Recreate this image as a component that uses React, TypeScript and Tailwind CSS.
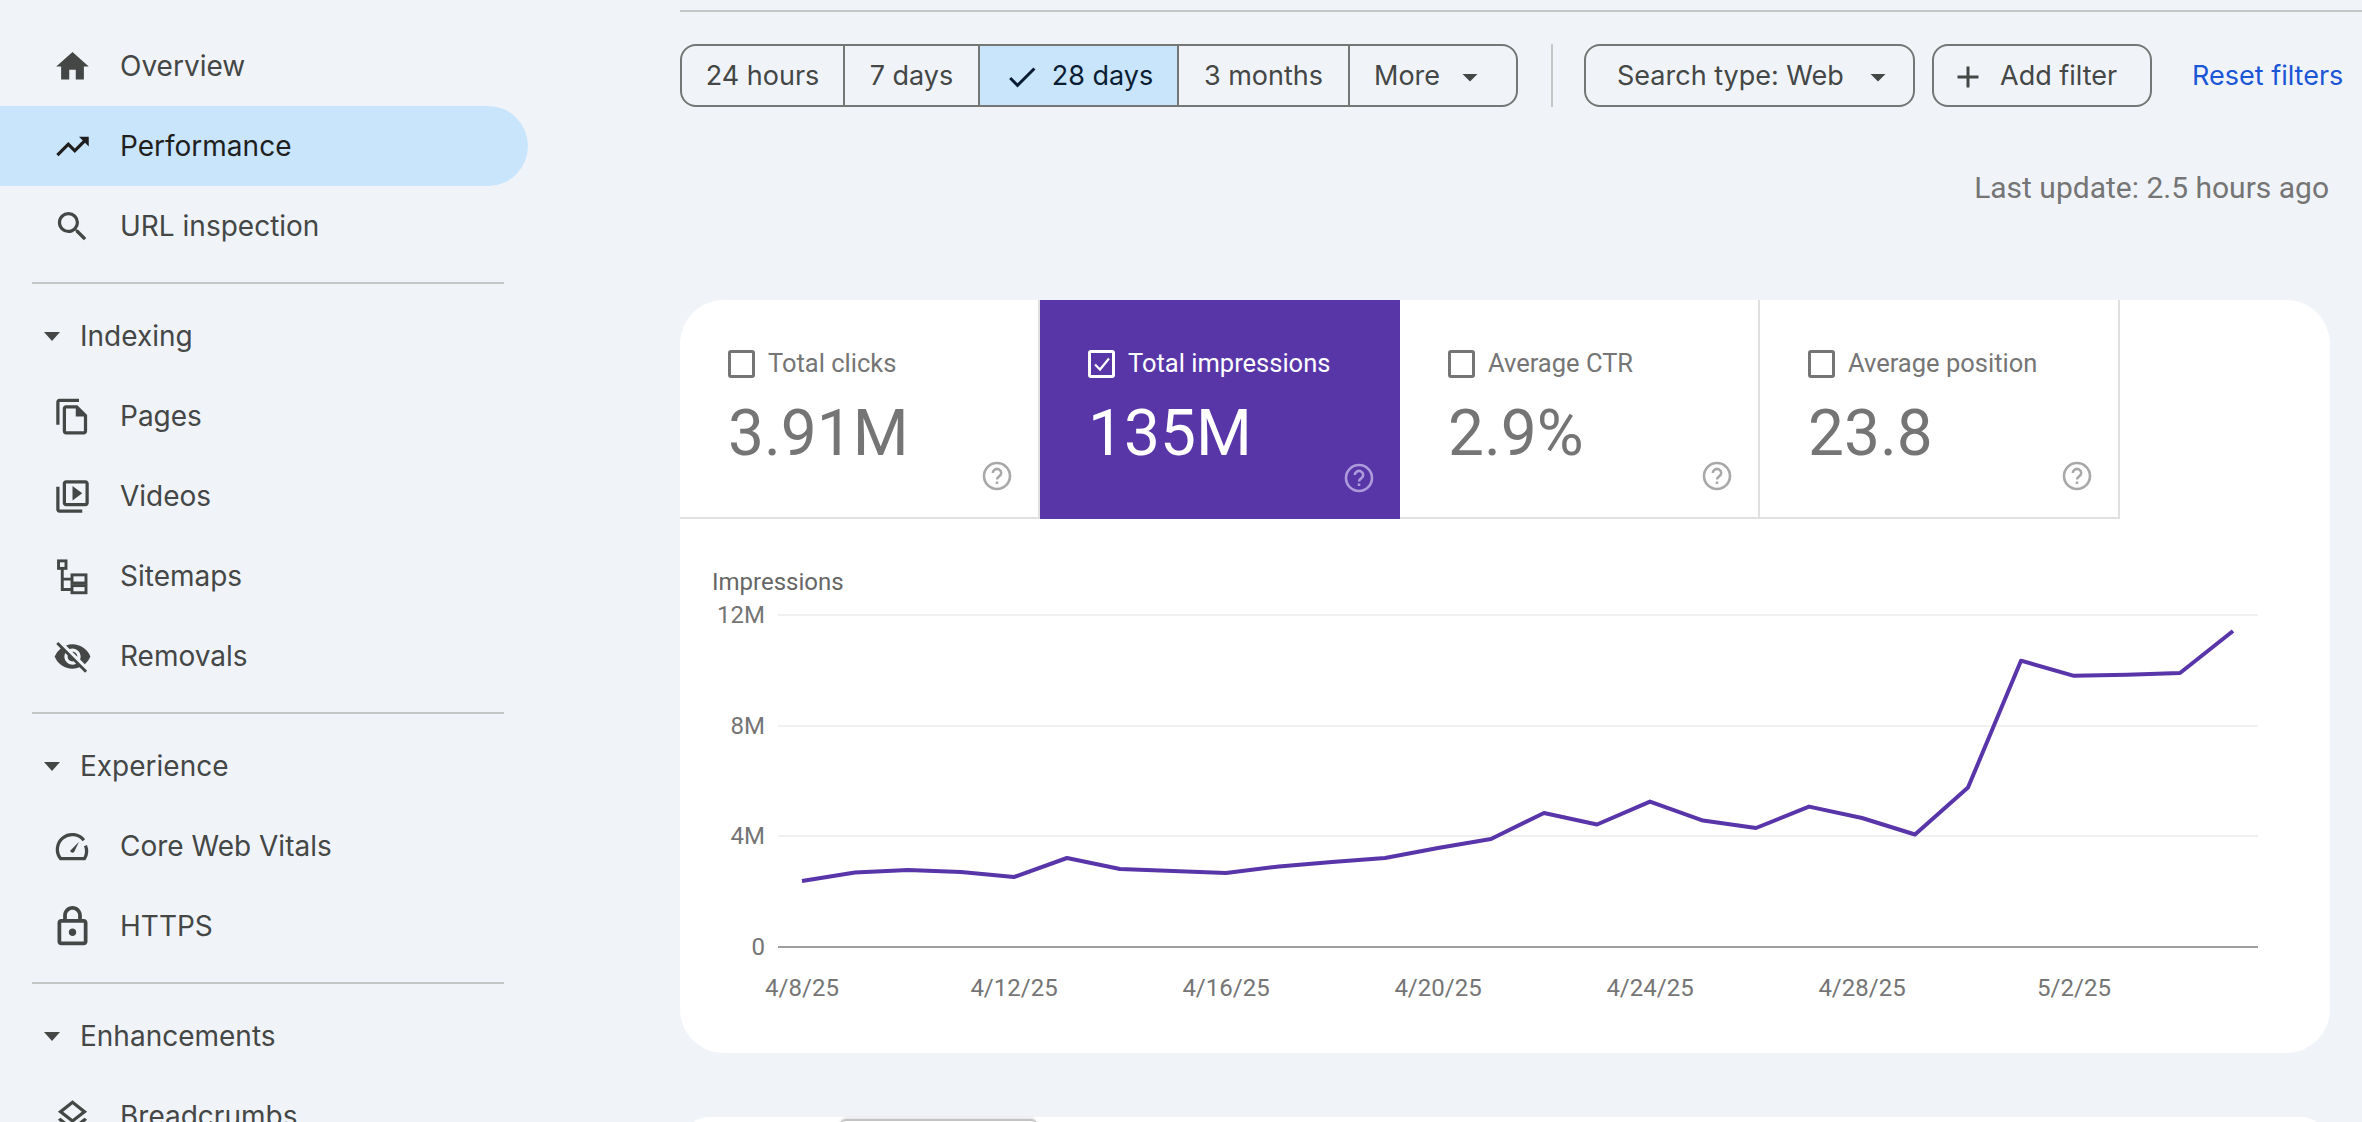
import React from "react";
import {
  MdHome,
  MdTrendingUp,
  MdSearch,
  MdOutlineFileCopy,
  MdOutlineVideoLibrary,
  MdVisibilityOff,
  MdOutlineLock,
  MdOutlineLayers,
  MdArrowDropDown,
  MdCheck,
  MdAdd,
} from "react-icons/md";

const ui = "font-['Inter','Liberation_Sans',sans-serif]";
const rb = "font-['Roboto','Liberation_Sans',sans-serif]";

function SitemapIcon() {
  return (
    <svg viewBox="0 0 24 24" width={39} height={39} fill="none" stroke="currentColor" strokeWidth="1.8">
      <rect x="3.4" y="2.4" width="4.6" height="4.6" />
      <path d="M5.7 7v13h6M5.7 13.6h6" />
      <rect x="11.7" y="11" width="8.6" height="5" />
      <rect x="11.7" y="17.6" width="8.6" height="4.4" />
    </svg>
  );
}

function GaugeIcon() {
  return (
    <svg viewBox="0 0 24 24" width={39} height={39} fill="none" stroke="currentColor" strokeWidth="2">
      <path d="M19 8.2A9 9 0 0 0 4.6 19.4h14.8a9 9 0 0 0 .6-8" />
      <path d="M10.6 14.6 16 9l-3 6.4a1.4 1.4 0 0 1-2.4-.8z" fill="currentColor" stroke="none" />
    </svg>
  );
}

function Item({ icon, label, active }: { icon: React.ReactNode; label: string; active?: boolean }) {
  return (
    <div
      className={
        "flex h-[80px] w-[528px] items-center rounded-r-[40px] pl-[53px] " +
        (active ? "bg-[#c8e5fc] text-[#1f1f1f]" : "text-[#444746]")
      }
    >
      <span className="flex h-[39px] w-[39px] shrink-0 items-center justify-center">{icon}</span>
      <span className="ml-[28px] whitespace-nowrap text-[28px] leading-none">{label}</span>
    </div>
  );
}

function Section({ label }: { label: string }) {
  return (
    <div className="flex h-[80px] items-center pl-[44px] text-[#444746]">
      <svg viewBox="0 0 16 9" width={16} height={9} fill="currentColor" className="shrink-0">
        <path d="M0 0h16L8 9z" />
      </svg>
      <span className="ml-[20px] text-[28px] leading-none">{label}</span>
    </div>
  );
}

function Divider() {
  return <div className="mt-[16px] mb-[12px] ml-[32px] h-[2px] w-[472px] bg-[#c4c7c5]" />;
}

function Sidebar() {
  const icon = { size: 39 };
  return (
    <aside className={"w-[680px] shrink-0 pt-[26px] " + ui}>
      <Item icon={<MdHome {...icon} />} label="Overview" />
      <Item icon={<MdTrendingUp {...icon} />} label="Performance" active />
      <Item icon={<MdSearch {...icon} />} label="URL inspection" />
      <Divider />
      <Section label="Indexing" />
      <Item icon={<MdOutlineFileCopy {...icon} />} label="Pages" />
      <Item icon={<MdOutlineVideoLibrary {...icon} />} label="Videos" />
      <Item icon={<SitemapIcon />} label="Sitemaps" />
      <Item icon={<MdVisibilityOff {...icon} />} label="Removals" />
      <Divider />
      <Section label="Experience" />
      <Item icon={<GaugeIcon />} label="Core Web Vitals" />
      <Item icon={<MdOutlineLock size={45} className="shrink-0" />} label="HTTPS" />
      <Divider />
      <Section label="Enhancements" />
      <Item icon={<MdOutlineLayers {...icon} />} label="Breadcrumbs" />
    </aside>
  );
}

function Seg({ w, children, active }: { w: string; children: React.ReactNode; active?: boolean }) {
  return (
    <div
      className={
        "flex h-full items-center justify-center border-r-2 border-[#747775] pt-[2px] " +
        w +
        (active ? " bg-[#c8e5fc] text-[#0b1d33]" : "")
      }
    >
      {children}
    </div>
  );
}

function Toolbar() {
  return (
    <div className={"mt-[32px] flex h-[63px] items-stretch text-[27px] text-[#444746] " + ui}>
      <div className="flex w-[838px] overflow-hidden rounded-[16px] border-2 border-[#747775]">
        <Seg w="w-[163px]">24 hours</Seg>
        <Seg w="w-[135px]">7 days</Seg>
        <Seg w="w-[199px]" active>
          <MdCheck size={36} className="mr-[12px] text-[#0b1d33]" />
          28 days
        </Seg>
        <Seg w="w-[171px]">3 months</Seg>
        <div className="flex flex-1 items-center pl-[24px] pt-[2px]">
          More
          <MdArrowDropDown size={36} className="ml-[12px]" />
        </div>
      </div>
      <div className="ml-[33px] w-[2px] bg-[#c4c7c5]" />
      <div className="ml-[31px] flex w-[331px] items-center rounded-[16px] border-2 border-[#747775] pl-[31px] pt-[2px]">
        Search type: Web
        <MdArrowDropDown size={36} className="ml-[16px]" />
      </div>
      <div className="ml-[17px] flex w-[220px] items-center rounded-[16px] border-2 border-[#747775] pl-[16px] pt-[2px]">
        <MdAdd size={36} />
        <span className="ml-[14px]">Add filter</span>
      </div>
      <div className="ml-[40px] flex items-center whitespace-nowrap pt-[2px] text-[#1a56d6]">Reset filters</div>
    </div>
  );
}

function CheckBox({ on }: { on?: boolean }) {
  return (
    <span
      className={
        "flex h-[28px] w-[27px] shrink-0 items-center justify-center rounded-[3px] border-[3px] " +
        (on ? "border-white" : "border-[#757575]")
      }
    >
      {on && (
        <svg viewBox="0 0 20 20" width={20} height={20} fill="none" stroke="white" strokeWidth="2.2">
          <path d="M3 10.5 8 15.5 17 4.5" />
        </svg>
      )}
    </span>
  );
}

function Help({ on }: { on?: boolean }) {
  const c = on ? "#ad9bdb" : "#a8a8a8";
  return (
    <svg viewBox="0 0 30 30" width={30} height={30} fill="none" stroke={c} strokeWidth="2.6" className="absolute right-[26px] bottom-[26px]">
      <circle cx="15" cy="15" r="13" />
      <path d="M10.8 12a4.2 4 0 1 1 6.6 3.2c-1.5 1-2.4 1.6-2.4 3.4" />
      <path d="M15 20.4v2.6" />
    </svg>
  );
}

function Metric({ label, value, on }: { label: string; value: string; on?: boolean }) {
  return (
    <div
      className={
        "relative h-[219px] w-[360px] shrink-0 pl-[48px] pt-[50px] " +
        (on ? "bg-[#5836a8] text-white" : "border-r-2 border-b-2 border-[#e0e0e0] text-[#757575]")
      }
    >
      <div className="flex h-[28px] items-center gap-[13px] text-[25.5px] leading-none">
        <CheckBox on={on} />
        <span>{label}</span>
      </div>
      <div className="mt-[24px] text-[64px] font-normal leading-[64px]">{value}</div>
      <Help on={on} />
    </div>
  );
}

const ys = [881, 872.5, 870, 872, 877, 858, 869, 871, 873, 866.5, 862, 858, 848, 839, 813, 824.5, 801.6, 820.6, 828, 806.6, 818, 834.5, 787.6, 660.7, 675.8, 674.7, 673, 631];

function Chart() {
  const ox = 680;
  const oy = 560;
  const points = ys.map((y, i) => `${802 + 53 * i - ox},${y - oy}`).join(" ");
  const grid = [
    { y: 615, l: "12M" },
    { y: 726, l: "8M" },
    { y: 836, l: "4M" },
  ];
  const dates = [
    ["4/8/25", 802],
    ["4/12/25", 1014],
    ["4/16/25", 1226],
    ["4/20/25", 1438],
    ["4/24/25", 1650],
    ["4/28/25", 1862],
    ["5/2/25", 2074],
  ] as const;
  return (
    <div className="mt-[41px]">
      <svg viewBox="0 0 1650 493" width={1650} height={493} className="block" style={{ fontFamily: "Roboto" }}>
        <text x={32} y={30} fontSize={24} fill="#666666">Impressions</text>
        {grid.map((g) => (
          <g key={g.l}>
            <line x1={98} x2={1578} y1={g.y - oy} y2={g.y - oy} stroke="#f0f0f0" strokeWidth={2} />
            <text x={85} y={g.y - oy + 8} fontSize={24} fill="#757575" textAnchor="end">{g.l}</text>
          </g>
        ))}
        <line x1={98} x2={1578} y1={387} y2={387} stroke="#9e9e9e" strokeWidth={2} />
        <text x={85} y={395} fontSize={24} fill="#757575" textAnchor="end">0</text>
        {dates.map(([l, x]) => (
          <text key={l} x={x - ox} y={436} fontSize={24} fill="#757575" textAnchor="middle">{l}</text>
        ))}
        <polyline points={points} fill="none" stroke="#5835a8" strokeWidth={4} strokeLinejoin="round" />
      </svg>
    </div>
  );
}

function Card() {
  return (
    <div className={"mt-[97px] h-[753px] w-[1650px] overflow-hidden rounded-[44px] bg-white " + rb}>
      <div className="flex">
        <Metric label="Total clicks" value="3.91M" />
        <Metric label="Total impressions" value="135M" on />
        <Metric label="Average CTR" value="2.9%" />
        <Metric label="Average position" value="23.8" />
      </div>
      <Chart />
    </div>
  );
}

export default function App() {
  return (
    <div className="flex h-[1122px] w-[2362px] overflow-hidden bg-[#f0f4f9]">
      <Sidebar />
      <main className="min-w-0 flex-1">
        <div className="mt-[10px] h-[2px] bg-[#c4c7c5]" />
        <Toolbar />
        <div className={"mt-[66px] mr-[33px] text-right text-[30px] leading-[30px] text-[#757575] " + rb}>Last update: 2.5 hours ago</div>
        <Card />
        <div className="mt-[64px] h-[60px] w-[1650px] rounded-[44px] bg-white pt-[2px]">
          <div className="ml-[160px] h-[20px] w-[197px] rounded-t-[6px] border-t-2 border-[#c4c4c4] bg-[#fafafa] shadow-[0_-1px_3px_rgba(0,0,0,0.15)]" />
        </div>
      </main>
    </div>
  );
}
